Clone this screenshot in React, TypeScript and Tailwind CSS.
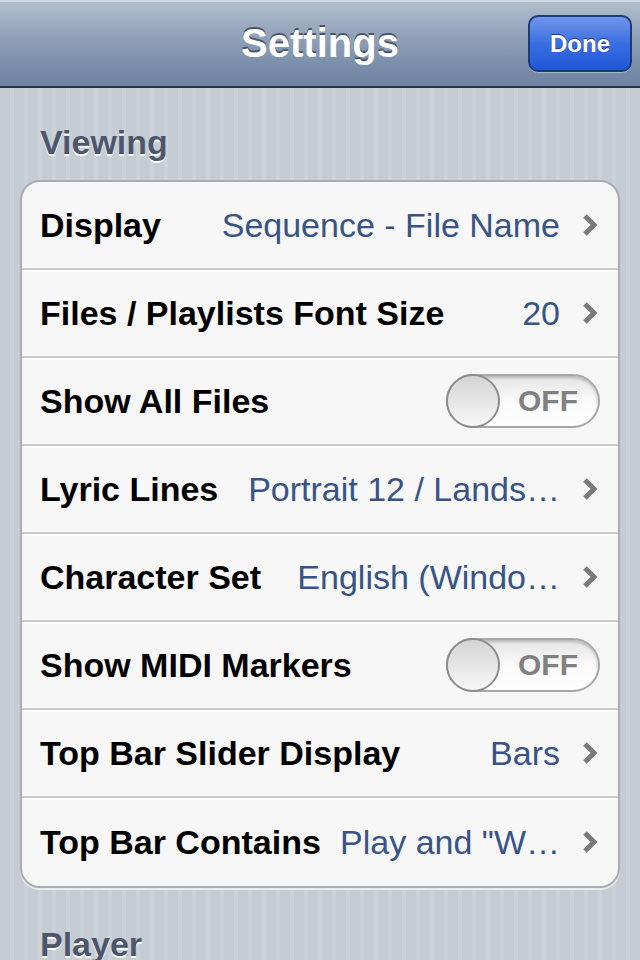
import React from 'react';

type Row =
  | { label: string; kind: 'value'; value: string }
  | { label: string; kind: 'toggle' };

const rows: Row[] = [
  { label: 'Display', kind: 'value', value: 'Sequence - File Name' },
  { label: 'Files / Playlists Font Size', kind: 'value', value: '20' },
  { label: 'Show All Files', kind: 'toggle' },
  { label: 'Lyric Lines', kind: 'value', value: 'Portrait 12 / Lands…' },
  { label: 'Character Set', kind: 'value', value: 'English (Windo…' },
  { label: 'Show MIDI Markers', kind: 'toggle' },
  { label: 'Top Bar Slider Display', kind: 'value', value: 'Bars' },
  { label: 'Top Bar Contains', kind: 'value', value: 'Play and "W…' },
];

const Chevron = () => (
  <svg width="16" height="24" viewBox="0 0 16 24" className="shrink-0">
    <polyline points="3,3 12,12 3,21" fill="none" stroke="#7a7a7a" strokeWidth="5" />
  </svg>
);

const Toggle = () => (
  <div className="relative -mr-[2px] h-[54px] w-[154px] shrink-0 rounded-full border-2 border-[#a8a8a8] bg-gradient-to-b from-[#e4e4e4] via-[#fbfbfb] to-[#fefefe] shadow-[inset_0_2px_3px_rgba(0,0,0,0.2)]">
    <div className="absolute -left-[2px] -top-[2px] h-[54px] w-[54px] rounded-full border-2 border-[#8d8d8d] bg-gradient-to-b from-[#d4d4d4] to-[#f8f8f8]" />
    <span className="absolute right-[20px] top-[6px] text-[30px] font-bold leading-[38px] text-[#808080] [text-shadow:0_1px_0_#fff]">
      OFF
    </span>
  </div>
);

export default function App() {
  return (
    <div
      className="h-[960px] w-[640px] overflow-hidden bg-[repeating-linear-gradient(90deg,#c5ccd4_0px,#c5ccd4_10px,#cbd2d8_10px,#cbd2d8_14px)]"
      style={{ fontFamily: '"Liberation Sans", Arial, sans-serif' }}
    >
      {/* nav bar */}
      <div className="relative flex h-[88px] items-center justify-center border-b-2 border-[#2d3441] bg-gradient-to-b from-[#b2bfcf] via-[#8b9cb4] to-[#6d83a1]">
        <div className="absolute inset-x-0 top-0 h-[2px] bg-[#cdd5df]" />
        <h1 className="text-[40px] font-bold text-white [text-shadow:0_-2px_0_#4a5568]">Settings</h1>
        <button className="absolute right-[8px] top-[15px] h-[57px] w-[104px] rounded-[10px] border-2 border-[#1c3c78] bg-gradient-to-b from-[#7196ea] via-[#3a6ee0] to-[#1f56d8] text-[24px] font-bold text-white [text-shadow:0_-1px_0_#1a3a80] shadow-[0_1px_0_rgba(255,255,255,0.35)]">
          Done
        </button>
      </div>

      {/* section header */}
      <div className="px-[40px] pt-[34px] pb-[18px]">
        <h2 className="text-[34px] font-bold leading-[40px] text-[#4c566c] [text-shadow:0_2px_0_#ffffff]">Viewing</h2>
      </div>

      {/* grouped table */}
      <div className="mx-[20px] overflow-hidden rounded-[20px] border-2 border-[#a9acb1] bg-[#f7f7f7] shadow-[0_2px_0_rgba(255,255,255,0.6)]">
        {rows.map((row, i) => (
          <div
            key={row.label}
            className={
              'flex h-[88px] items-center gap-[18px] pl-[18px] pr-[20px] ' +
              (i < rows.length - 1 ? 'border-b-2 border-[#cbcbcb] shadow-[0_2px_0_#ffffff]' : '')
            }
          >
            <span className="shrink-0 whitespace-nowrap text-[34px] font-bold leading-[40px] text-black">
              {row.label}
            </span>
            {row.kind === 'value' ? (
              <div className="flex min-w-0 flex-1 items-center justify-end gap-[22px]">
                <span className="min-w-0 whitespace-nowrap text-[34px] leading-[40px] text-[#385487]">{row.value}</span>
                <Chevron />
              </div>
            ) : (
              <div className="flex flex-1 justify-end">
                <Toggle />
              </div>
            )}
          </div>
        ))}
      </div>

      <div className="px-[40px] pt-[36px]">
        <h2 className="text-[34px] font-bold leading-[40px] text-[#4c566c] [text-shadow:0_2px_0_#ffffff]">Player</h2>
      </div>
    </div>
  );
}
